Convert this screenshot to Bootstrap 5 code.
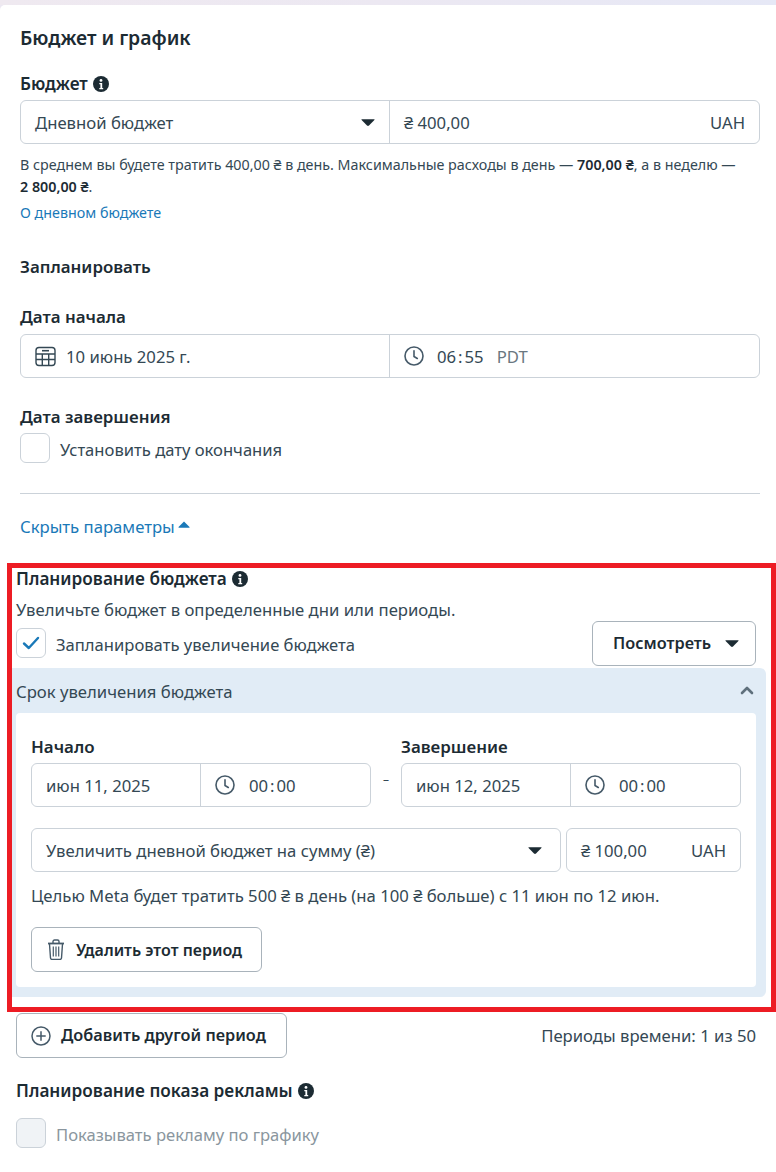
<!doctype html>
<html lang="ru">
<head>
<meta charset="utf-8">
<title>Бюджет и график</title>
<link rel="stylesheet" href="https://cdn.jsdelivr.net/npm/bootstrap@5.3.0/dist/css/bootstrap.min.css">
<style>
html,body{background:#ece8f2;}
body{margin:0;width:776px;height:1172px;overflow:hidden;font-family:"Noto Sans","Open Sans",sans-serif;color:#1c2b33;font-size:16.7px;}
.topstrip{height:5px;background:linear-gradient(90deg,#efe9f0,#ece8f2 50%,#e6e8f6);}
.sheet{background:#fff;height:1167px;border-top-left-radius:5px;}
.sec-a{padding:0 16px 0 20px;}
.h-title{font-size:19.4px;font-weight:600;line-height:24px;padding-top:21px;}
.lbl{font-size:16.9px;font-weight:600;line-height:22px;}
.lbl.has-info{font-size:17.2px;}
.info{width:16px;height:16px;flex:none;margin-left:1px;}
.fieldbox{height:44px;border:1px solid #cbd2d9;border-radius:6px;background:#fff;font-size:16.7px;line-height:22px;color:#344854;}
.fieldbox .cell{padding:0 14px;height:100%;}
.fieldbox .cell+.cell{border-left:1px solid #cbd2d9;}
.fieldbox .cell>span{padding-top:2px;}
.caret{width:14px;height:9px;flex:none;}
.help{font-size:14.3px;line-height:22px;color:#344854;}
.help b{font-weight:600;color:#1c2b33;}
.lnk{color:#1a79b8;text-decoration:none;}
.tick{width:30px;height:30px;border:1px solid #cbd2d9;border-radius:6px;background:#fff;flex:none;}
.tick.off{background:#f0f3f6;}
.ticktxt{font-size:16.6px;color:#344854;line-height:22px;margin-left:2px;padding-top:3px;}
.rule{height:1px;background:#cbd2d9;margin:0;}
.redframe{margin-left:7px;width:769px;height:449px;border:5px solid #ed1c24;padding:0;}
.in16{padding:0 15px 0 4px;}
.plain{font-size:16.7px;line-height:22px;color:#344854;}
.btnx.btn{--bs-btn-border-color:#a9b3bb;--bs-btn-hover-border-color:#a9b3bb;--bs-btn-color:#1c2b33;--bs-btn-font-weight:600;--bs-btn-font-size:16.3px;--bs-btn-border-radius:6px;--bs-btn-padding-x:0;--bs-btn-padding-y:0;height:45px;background:#fff;}
.bluepanel{width:754px;height:329px;background:#e1ecf6;border-radius:0 6px 6px 0;padding:0 10px 10px 4px;}
.bluehead{height:45px;font-size:16.7px;color:#344854;}
.bluehead span{padding-top:2px;}
.whitecard{height:274px;background:#fff;border-radius:4px;padding:0 15px;}
.dash{width:30px;text-align:center;color:#344854;font-size:12px;line-height:1;}
.dtcol{width:340px;}
.clk{width:20px;height:20px;flex:none;}
.colon{padding:0 2px;}
.muted{color:#8a969e;}
.pdt{color:#6a7780;}
.row-b{padding-left:16px;padding-right:20px;}
</style>
</head>
<body>
<div class="topstrip"></div>
<main class="sheet">
  <div class="sec-a">
    <div class="h-title">Бюджет и график</div>
    <div class="lbl has-info d-flex align-items-center gap-1" style="margin-top:23px;">Бюджет
      <svg class="info" viewBox="0 0 16 16"><circle cx="8" cy="8" r="8" fill="#1c2b33"/><circle cx="8" cy="4.400" r="1.400" fill="#fff"/><path d="M6.300 6.900h2.900v5h1v1.300H6.300v-1.300h1.100V8.200H6.300z" fill="#fff"/></svg>
    </div>
    <div class="fieldbox d-flex" style="margin-top:5px;">
      <div class="cell d-flex align-items-center justify-content-between" style="width:368px;">
        <span>Дневной бюджет</span>
        <svg class="caret" viewBox="0 0 14 9"><path d="M1 1.200h12c.5 0 .7.5.4.900L8 7.600c-.6.600-1.400.600-2 0L.6 2.100C.3 1.700.5 1.200 1 1.200z" fill="#1c2b33"/></svg>
      </div>
      <div class="cell d-flex align-items-center justify-content-between flex-grow-1"><span>₴ 400,00</span><span>UAH</span></div>
    </div>
    <div class="help" style="margin-top:10px;">В среднем вы будете тратить 400,00 ₴ в день. Максимальные расходы в день — <b>700,00 ₴</b>, а в неделю —<br><b>2 800,00 ₴</b>.</div>
    <div class="help" style="margin-top:4px;"><a class="lnk" href="#">О дневном бюджете</a></div>
    <div class="lbl" style="margin-top:32px;">Запланировать</div>
    <div class="lbl" style="margin-top:28px;">Дата начала</div>
    <div class="fieldbox d-flex" style="margin-top:6px;">
      <div class="cell d-flex align-items-center" style="width:368px;gap:10px;">
        <svg width="21" height="21" viewBox="0 0 21 21" fill="none" stroke="#344854" stroke-width="1.400"><rect x="1" y="1.500" width="19" height="18" rx="3"/><path d="M7 4.700h7" stroke-width="1.600"/><path d="M1 8h19M1 13.500h19M7.300 8v11.500M13.700 8v11.500"/></svg>
        <span>10 июнь 2025 г.</span>
      </div>
      <div class="cell d-flex align-items-center flex-grow-1">
        <svg class="clk" viewBox="0 0 20 20" fill="none" stroke="#465a69" stroke-width="1.600"><circle cx="10" cy="10" r="9"/><path d="M10 4.800V10.500l3.300 2" stroke-linecap="round"/></svg>
        <span style="margin-left:13px;">06<span class="colon">:</span>55</span><span class="pdt" style="margin-left:13px;">PDT</span>
      </div>
    </div>
    <div class="lbl" style="margin-top:28px;">Дата завершения</div>
    <div class="d-flex align-items-center gap-2" style="margin-top:5px;height:30px;">
      <span class="tick"></span><span class="ticktxt">Установить дату окончания</span>
    </div>
    <div class="rule" style="margin-top:30px;"></div>
    <div class="plain d-flex align-items-center" style="margin-top:22px;"><a class="lnk" href="#">Скрыть параметры</a>
      <svg width="12" height="7" viewBox="0 0 12 7" style="margin-left:3px;margin-top:-5px;"><path d="M6 .5 11.500 6c.2.300 0 .7-.4.7H.900c-.4 0-.6-.4-.4-.7z" fill="#1a79b8"/></svg>
    </div>
  </div>

  <section class="redframe" style="margin-top:25px;">
    <div class="in16">
      <div class="lbl has-info d-flex align-items-center gap-1">Планирование бюджета
        <svg class="info" viewBox="0 0 16 16"><circle cx="8" cy="8" r="8" fill="#1c2b33"/><circle cx="8" cy="4.400" r="1.400" fill="#fff"/><path d="M6.300 6.900h2.900v5h1v1.300H6.300v-1.300h1.100V8.200H6.300z" fill="#fff"/></svg>
      </div>
      <div class="plain" style="margin-top:9px;">Увеличьте бюджет в определенные дни или периоды.</div>
      <div class="d-flex justify-content-between align-items-start" style="height:47px;">
        <div class="d-flex align-items-center gap-2" style="margin-top:7px;height:30px;">
          <span class="tick d-flex align-items-center justify-content-center">
            <svg width="18" height="14" viewBox="0 0 18 14" fill="none" stroke="#1a79b8" stroke-width="2.400" stroke-linecap="round" stroke-linejoin="round"><path d="M2 7.500 6.800 12 16 2"/></svg>
          </span>
          <span class="ticktxt">Запланировать увеличение бюджета</span>
        </div>
        <button type="button" class="btn btnx d-flex align-items-center justify-content-start" style="width:164px;gap:14px;padding-left:20px;">Посмотреть
          <svg class="caret" viewBox="0 0 14 9"><path d="M1 1.200h12c.5 0 .7.5.4.900L8 7.600c-.6.600-1.400.600-2 0L.6 2.100C.3 1.700.5 1.200 1 1.200z" fill="#1c2b33"/></svg>
        </button>
      </div>
    </div>
    <div class="bluepanel">
      <div class="bluehead d-flex align-items-center justify-content-between" style="padding-right:2px;">
        <span>Срок увеличения бюджета</span>
        <svg width="14" height="9" viewBox="0 0 14 9" fill="none" stroke="#5f707c" stroke-width="2.600" stroke-linecap="round" stroke-linejoin="round"><path d="M2 7 7 2l5 5"/></svg>
      </div>
      <div class="whitecard">
        <div class="d-flex align-items-end" style="padding-top:23px;">
          <div class="dtcol">
            <div class="lbl">Начало</div>
            <div class="fieldbox d-flex" style="margin-top:5px;">
              <div class="cell d-flex align-items-center" style="width:168px;"><span>июн 11, 2025</span></div>
              <div class="cell d-flex align-items-center flex-grow-1">
                <svg class="clk" viewBox="0 0 20 20" fill="none" stroke="#465a69" stroke-width="1.600"><circle cx="10" cy="10" r="9"/><path d="M10 4.800V10.500l3.300 2" stroke-linecap="round"/></svg>
                <span style="margin-left:14px;">00<span class="colon">:</span>00</span>
              </div>
            </div>
          </div>
          <div class="dash" style="padding-bottom:21px;">–</div>
          <div class="dtcol">
            <div class="lbl">Завершение</div>
            <div class="fieldbox d-flex" style="margin-top:5px;">
              <div class="cell d-flex align-items-center" style="width:168px;"><span>июн 12, 2025</span></div>
              <div class="cell d-flex align-items-center flex-grow-1">
                <svg class="clk" viewBox="0 0 20 20" fill="none" stroke="#465a69" stroke-width="1.600"><circle cx="10" cy="10" r="9"/><path d="M10 4.800V10.500l3.300 2" stroke-linecap="round"/></svg>
                <span style="margin-left:14px;">00<span class="colon">:</span>00</span>
              </div>
            </div>
          </div>
        </div>
        <div class="d-flex" style="margin-top:21px;gap:5px;">
          <div class="fieldbox d-flex" style="width:530px;">
            <div class="cell d-flex align-items-center justify-content-between w-100" style="padding-right:18px;"><span>Увеличить дневной бюджет на сумму (₴)</span>
              <svg class="caret" viewBox="0 0 14 9"><path d="M1 1.200h12c.5 0 .7.5.4.900L8 7.600c-.6.600-1.400.600-2 0L.6 2.100C.3 1.700.5 1.200 1 1.200z" fill="#1c2b33"/></svg>
            </div>
          </div>
          <div class="fieldbox d-flex" style="width:175px;">
            <div class="cell d-flex align-items-center justify-content-between w-100"><span>₴ 100,00</span><span>UAH</span></div>
          </div>
        </div>
        <div class="plain" style="margin-top:13px;">Целью Meta будет тратить 500 ₴ в день (на 100 ₴ больше) с 11 июн по 12 июн.</div>
        <button type="button" class="btn btnx d-flex align-items-center justify-content-start" style="width:231px;margin-top:20px;gap:11px;--bs-btn-font-size:16px;padding-left:15px;">
          <svg width="18" height="21" viewBox="0 0 18 21" fill="none" stroke="#465a69" stroke-width="1.400"><path d="M1 4.500h16" stroke-width="1.800"/><path d="M6 4V2.500C6 1.700 6.700 1 7.500 1h3c.8 0 1.500.700 1.500 1.500V4"/><path d="M2.500 5l1 14c.1.900.700 1.400 1.500 1.400h8c.8 0 1.400-.5 1.500-1.400l1-14"/><path d="M6.300 7.500v10M9 7.500v10M11.700 7.500v10" stroke-width="1.200"/></svg>
          Удалить этот период
        </button>
      </div>
    </div>
  </section>

  <div class="row-b d-flex justify-content-between align-items-center" style="margin-top:1px;">
    <button type="button" class="btn btnx d-flex align-items-center justify-content-start" style="width:271px;gap:10px;padding-left:14px;">
      <svg width="20" height="20" viewBox="0 0 20 20" fill="none" stroke="#465a69" stroke-width="1.500"><circle cx="10" cy="10" r="9"/><path d="M10 5.300v9.400M5.300 10h9.400"/></svg>
      Добавить другой период
    </button>
    <span class="plain">Периоды времени: 1 из 50</span>
  </div>
  <div class="row-b">
    <div class="lbl has-info d-flex align-items-center gap-1" style="margin-top:22px;">Планирование показа рекламы
      <svg class="info" viewBox="0 0 16 16"><circle cx="8" cy="8" r="8" fill="#1c2b33"/><circle cx="8" cy="4.400" r="1.400" fill="#fff"/><path d="M6.300 6.900h2.900v5h1v1.300H6.300v-1.300h1.100V8.200H6.300z" fill="#fff"/></svg>
    </div>
    <div class="d-flex align-items-center gap-2" style="margin-top:16px;height:30px;">
      <span class="tick off"></span><span class="ticktxt muted">Показывать рекламу по графику</span>
    </div>
  </div>
</main>
<script src="https://cdn.jsdelivr.net/npm/bootstrap@5.3.0/dist/js/bootstrap.bundle.min.js"></script>
</body>
</html>
